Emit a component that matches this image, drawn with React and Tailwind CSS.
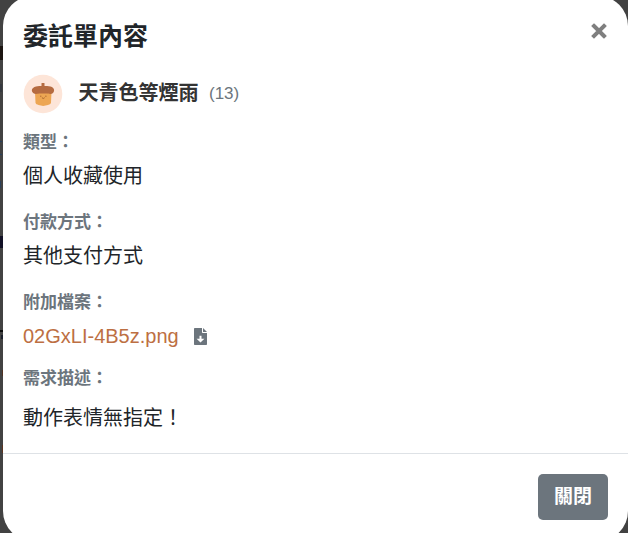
// Bits of the page that show through beside the dialog
const slivers = [
  { id: 'a', className: 'top-[46px] left-0 h-[14px] w-[3px] bg-[#1c1511]' },
  { id: 'b', className: 'top-[84px] left-0 h-[8px] w-[2px] bg-[#35393f]' },
  { id: 'c', className: 'top-[141px] left-0 h-[1px] w-[2px] bg-[#263f5c]' },
  { id: 'd', className: 'top-[154px] left-0 h-[1px] w-[2px] bg-[#263f5c]' },
  { id: 'e', className: 'top-[181px] left-0 h-[7px] w-[1px] bg-[#2b4058]' },
  { id: 'f', className: 'top-[236px] left-0 h-[12px] w-[3px] bg-[#111025]' },
  { id: 'g', className: 'top-[330px] left-0 h-[2px] w-[3px] bg-[#0c0c0c]' },
  { id: 'h', className: 'top-[335px] left-[1px] h-[4px] w-[2px] bg-[#1b1f2b]' },
  { id: 'i', className: 'top-[370px] left-[2px] h-[6px] w-[1px] bg-[#4f3222]' },
  { id: 'j', className: 'top-[445px] left-[2px] h-[8px] w-[1px] bg-[#5a3420]' },
];

function AcornAvatar() {
  return (
    <svg viewBox="0 0 40 40" className="size-10 shrink-0" aria-hidden="true">
      <circle cx="20" cy="20" r="19.300" fill="#fde5d8" />
      <path d="M12 18h16.500l-.5 10.500c-.2 1.600-1.500 2-3 2.400L20.200 32l-4.700-1.100c-1.500-.4-2.800-.8-3-2.400z" fill="#eda653" />
      <path d="M13 12.500c2-.5 4.500-.5 7.200-.5s5.300 0 7.300.5c2.200.5 3.600 2 3.600 3.800 0 2.300-1.600 3.700-3.800 3.700-1.600 0-2.400-.4-4-.4h-6.200c-1.600 0-2.400.4-4 .4-2.200 0-4.300-1.400-4.300-3.700 0-1.800 2-3.300 4.200-3.800z" fill="#b56b40" />
      <rect x="18.500" y="9" width="3" height="6" rx=".5" fill="#b56b40" />
      <path d="M17.500 22.200h.5m4.600 0h.5M19.200 24q1.100 1.200 2.200 0" fill="none" stroke="#a8652f" strokeWidth="1" strokeLinecap="round" />
    </svg>
  );
}

function CloseIcon() {
  return (
    <svg viewBox="0 0 16 16" className="size-4" aria-hidden="true">
      <path d="M3 3l10 10M13 3L3 13" fill="none" stroke="currentColor" strokeWidth="4" strokeLinecap="square" strokeLinejoin="round" />
    </svg>
  );
}

function FileDownloadIcon() {
  return (
    <svg viewBox="0 0 13 17" className="h-[17px] w-[13px] shrink-0" aria-hidden="true">
      <path d="M1 0H8v4.200c0 .5.300.8.800.8H13v11c0 .6-.4 1-1 1H1c-.6 0-1-.4-1-1V1c0-.6.400-1 1-1z" fill="#6c757d" />
      <path d="M9 0l4 4H9z" fill="#6c757d" />
      <path d="M5.500 7.800h2v3h2.900L6.500 14.600 2.600 10.800h2.900z" fill="#fff" />
    </svg>
  );
}

function Label({ children }) {
  return <h3 className="text-[17px] leading-6 font-bold text-[#6c757d]">{children}</h3>;
}

export default function App() {
  return (
    <div className="relative h-[533px] w-[628px] overflow-hidden bg-[#424242] pl-[3px] font-['Liberation_Sans','Noto_Sans_CJK_TC',sans-serif] text-xl text-[#212529]">
      {slivers.map((s) => (
        <span key={s.id} className={`absolute ${s.className}`} />
      ))}

      <div className="-mt-1 flex h-[545px] w-[625px] flex-col rounded-[30px] bg-white">
        <div className="flex items-start justify-between pt-[21px] pr-[21px] pl-5">
          <h2 className="text-[25px] leading-[38px] font-bold">委託單內容</h2>
          <button type="button" aria-label="close" className="mt-[6px] text-[#7f7f7f]">
            <CloseIcon />
          </button>
        </div>

        <div className="h-[398px] px-5 pt-[19px]">
          <div className="flex items-center">
            <AcornAvatar />
            <span className="-mt-0.5 ml-[15.5px] leading-[30px] font-bold text-[#333]">天青色等煙雨</span>
            <span className="ml-[10.5px] text-[17px] leading-[30px] text-[#6c757d]">(13)</span>
          </div>

          <div className="mt-[17px]">
            <Label>類型：</Label>
            <p className="mt-[6px] leading-[30px]">個人收藏使用</p>
          </div>
          <div className="mt-5">
            <Label>付款方式：</Label>
            <p className="mt-[6px] leading-[30px]">其他支付方式</p>
          </div>
          <div className="mt-5">
            <Label>附加檔案：</Label>
            <div className="mt-[6px] flex items-center leading-[30px]">
              <a href="#file" className="text-[#bd6f43]">02GxLI-4B5z.png</a>
              <span className="ml-[15px]">
                <FileDownloadIcon />
              </span>
            </div>
          </div>
          <div className="mt-4">
            <Label>需求描述：</Label>
            <p className="mt-[12px] leading-[30px]">動作表情無指定！</p>
          </div>
        </div>

        <div className="flex justify-end border-t border-[#dee2e6] pt-5 pr-5">
          <button type="button" className="h-[46px] w-[70px] rounded-[5px] bg-[#6c757d] text-[19px] font-bold text-white">
            關閉
          </button>
        </div>
      </div>
    </div>
  );
}
